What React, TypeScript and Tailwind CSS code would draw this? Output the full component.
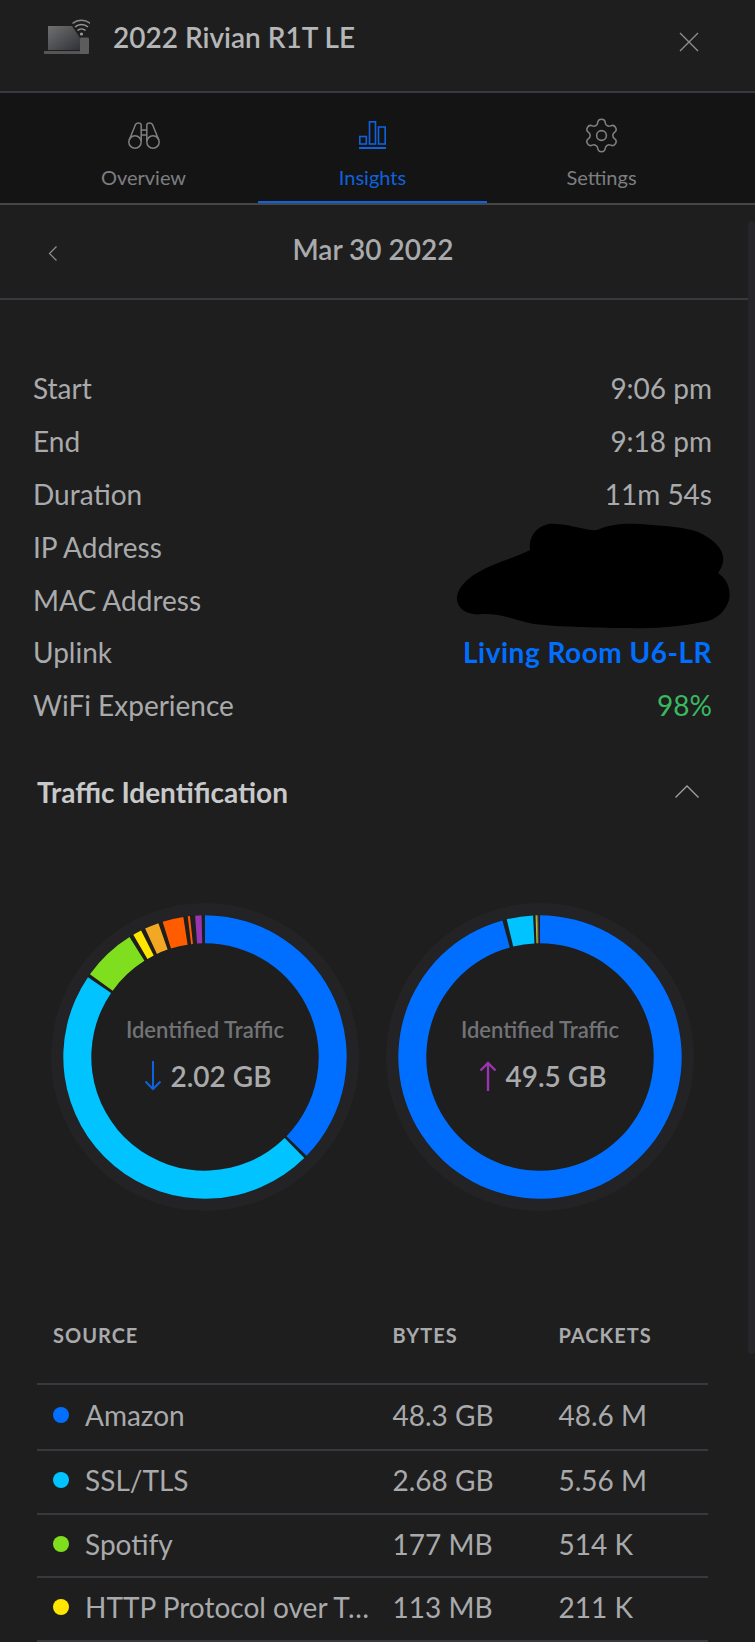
import { Settings } from "lucide-react";

const pt = (r: number, deg: number) => {
  const a = ((deg - 90) * Math.PI) / 180;
  return `${(153 + r * Math.cos(a)).toFixed(2)} ${(153 + r * Math.sin(a)).toFixed(2)}`;
};

// one ring slice, angles clockwise from the top
const slicePath = (from: number, to: number) => {
  const large = to - from > 180 ? 1 : 0;
  const r1 = 141.7;
  const r2 = 113.7;
  return `M ${pt(r1, from)} A ${r1} ${r1} 0 ${large} 1 ${pt(r1, to)} L ${pt(r2, to)} A ${r2} ${r2} 0 ${large} 0 ${pt(r2, from)} Z`;
};

const downSlices = [
  { from: 0, to: 134.2, color: "#006fff" },
  { from: 135.5, to: 304.3, color: "#00c3ff" },
  { from: 305.7, to: 327.8, color: "#7fdf1f" },
  { from: 329.6, to: 333.2, color: "#ffe600" },
  { from: 335, to: 340.8, color: "#f2a825" },
  { from: 342.6, to: 351.2, color: "#ff5c00" },
  { from: 353, to: 353.9, color: "#ff5c00" },
  { from: 356, to: 358.6, color: "#9a35b0" },
];

const upSlices = [
  { from: 0, to: 344.6, color: "#006fff" },
  { from: 346.4, to: 357.2, color: "#00c3ff" },
  { from: 358.2, to: 358.7, color: "#7fdf1f" },
  { from: 358.7, to: 359, color: "#f2a825" },
  { from: 359, to: 359.3, color: "#9a35b0" },
];

const details = [
  { label: "Start", value: "9:06 pm", tone: "text-[#a9aaac]" },
  { label: "End", value: "9:18 pm", tone: "text-[#a9aaac]" },
  { label: "Duration", value: "11m 54s", tone: "text-[#a9aaac]" },
  { label: "IP Address", value: "", tone: "" },
  { label: "MAC Address", value: "", tone: "" },
  { label: "Uplink", value: "Living Room U6-LR", tone: "text-[#006fff] font-bold tracking-[0.5px]" },
  { label: "WiFi Experience", value: "98%", tone: "text-[#39b860]" },
];

const rows = [
  { name: "Amazon", dot: "bg-[#006fff]", bytes: "48.3 GB", packets: "48.6 M", height: "h-[66px]" },
  { name: "SSL/TLS", dot: "bg-[#00c3ff]", bytes: "2.68 GB", packets: "5.56 M", height: "h-[64px]" },
  { name: "Spotify", dot: "bg-[#7fdf1f]", bytes: "177 MB", packets: "514 K", height: "h-[63.5px]" },
  { name: "HTTP Protocol over T…", dot: "bg-[#ffe600]", bytes: "113 MB", packets: "211 K", height: "h-[63.5px]" },
];

const DeviceIcon = () => (
  <svg width="46" height="38" viewBox="14 18 46 38" fill="none">
    <defs>
      <linearGradient id="screen" x1="0" y1="0" x2="1" y2="1">
        <stop offset="0" stopColor="#707070" />
        <stop offset="1" stopColor="#303238" />
      </linearGradient>
    </defs>
    <path d="M18 26 H42 L50 38 V50 H18 Z" fill="url(#screen)" />
    <rect x="14" y="51" width="37" height="3" fill="#555" />
    <rect x="50" y="37.500" width="9" height="16.500" rx="1" fill="#5c5c5c" />
    <circle cx="51.500" cy="34" r="1.600" fill="#9a9a9a" />
    <path d="M47.500 30.500 a6 6 0 0 1 8 0" stroke="#999" strokeWidth="1.500" />
    <path d="M45 27 a10 10 0 0 1 13 0" stroke="#999" strokeWidth="1.500" />
    <path d="M42.500 23.500 a14 14 0 0 1 18 0" stroke="#888" strokeWidth="1.500" />
  </svg>
);

const BinocularsIcon = () => (
  <svg width="32" height="27" viewBox="0 0 32 27" fill="none" stroke="#808080" strokeWidth="1.500">
    <circle cx="7" cy="20" r="6.200" />
    <circle cx="25" cy="20" r="6.200" />
    <path d="M1.200 18 L7.500 2.500 Q8.500 1 10.500 1 Q13 1 13.200 3 V19" />
    <path d="M30.800 18 L24.500 2.500 Q23.500 1 21.500 1 Q19 1 18.800 3 V19" />
    <path d="M13.200 8 H18.800 M13.200 13 H18.800" />
  </svg>
);

const BarsIcon = () => (
  <svg width="27" height="28" viewBox="0 0 27 28" fill="none" stroke="#0e62de" strokeWidth="1.600">
    <rect x="0.800" y="15.500" width="6.500" height="7.500" />
    <rect x="10.500" y="0.800" width="6" height="22.200" />
    <rect x="19.500" y="6" width="6.700" height="17" />
    <path d="M0 27 H27" strokeWidth="2" />
  </svg>
);

const Donut = ({
  slices,
  arrow,
  value,
}: {
  slices: { from: number; to: number; color: string }[];
  arrow: "down" | "up";
  value: string;
}) => (
  <div className="relative w-[306px] h-[306px]">
    <svg className="overflow-visible" width="306" height="306" viewBox="0 0 306 306" fill="none">
      <circle cx="153" cy="153" r="148" stroke="#232326" strokeWidth="12" />
      {slices.map((s) => (
        <path key={s.from} d={slicePath(s.from, s.to)} fill={s.color} />
      ))}
    </svg>
    <div className="absolute inset-0 flex flex-col items-center justify-center pb-[4px]">
      <p className="text-[22px] leading-[28px] font-semibold text-[#727377]">Identified Traffic</p>
      <div className="mt-[14px] flex flex-row items-center gap-[9px] pl-[5px]">
        {arrow === "down" ? (
          <svg width="18" height="30" viewBox="0 0 18 30" fill="none" stroke="#0e62de" strokeWidth="2">
            <path d="M9 0 V28 M1.500 20.500 L9 28 L16.500 20.500" />
          </svg>
        ) : (
          <svg width="18" height="30" viewBox="0 0 18 30" fill="none" stroke="#9a35b0" strokeWidth="2.400">
            <path d="M9 30 V2 M1.500 9.500 L9 2 L16.500 9.500" />
          </svg>
        )}
        <p className="text-[28px] leading-[36px] font-semibold text-[#a9aaac]">{value}</p>
      </div>
    </div>
  </div>
);

export default function App() {
  return (
    <div className="relative w-[755px] h-[1642px] overflow-hidden bg-[#1e1e1e] font-['Lato','Liberation_Sans',sans-serif]">
      {/* Header */}
      <div className="h-[93px] border-b-2 border-[#38393e] flex flex-row justify-between pl-[44px] pr-[56px]">
        <div className="flex flex-row items-start gap-[23px] pt-[18px]">
          <DeviceIcon />
          <p className="-mt-[1px] text-[28px] leading-[40px] font-semibold text-[#b5b6b8]">2022 Rivian R1T LE</p>
        </div>
        <svg className="mt-[32px]" width="20" height="20" viewBox="0 0 20 20" stroke="#8f9093" strokeWidth="1.300">
          <path d="M1 1 L19 19 M19 1 L1 19" />
        </svg>
      </div>

      {/* Tabs */}
      <div className="h-[112px] bg-[#141414] border-b-2 border-[#45464a] flex flex-row pl-[29px]">
        <div className="w-[229px] flex flex-col items-center pt-[27px]">
          <div className="h-[30px] flex items-center">
            <BinocularsIcon />
          </div>
          <p className="mt-[13px] text-[20px] leading-[28px] text-[#7d7e81]">Overview</p>
        </div>
        <div className="w-[229px] border-b-2 border-[#0e62de] flex flex-col items-center pt-[27px]">
          <div className="h-[30px] flex items-center">
            <BarsIcon />
          </div>
          <p className="mt-[13px] text-[20px] leading-[28px] text-[#0e62de]">Insights</p>
        </div>
        <div className="w-[229px] flex flex-col items-center pt-[27px]">
          <div className="h-[30px] flex items-center">
            <Settings size={39} strokeWidth={0.95} color="#808080" />
          </div>
          <p className="mt-[13px] text-[20px] leading-[28px] text-[#7d7e81]">Settings</p>
        </div>
      </div>

      {/* Date bar */}
      <div className="relative h-[95px] border-b-2 border-[#38393e] flex items-center justify-center pb-[5px] pr-[9px]">
        <svg className="absolute left-[48px] top-[41px]" width="10" height="15" viewBox="0 0 10 15" fill="none" stroke="#8f9093" strokeWidth="1.200">
          <path d="M8.500 0.500 L1.500 7.500 L8.500 14.500" />
        </svg>
        <p className="text-[28px] leading-[36px] font-semibold text-[#a9aaac]">Mar 30 2022</p>
      </div>

      {/* Details */}
      <div className="pt-[62px] pl-[33px] pr-[43px]">
        {details.map((d) => (
          <div key={d.label} className="h-[52.8px] flex flex-row items-center justify-between text-[28px] text-[#a9aaac]">
            <span>{d.label}</span>
            <span className={d.tone}>{d.value}</span>
          </div>
        ))}
      </div>

      {/* redacted values */}
      <svg className="absolute left-[450px] top-[516px]" width="285" height="120" viewBox="450 516 285 120">
        <path
          d="M530 550 C528 530 545 522 556 524 C575 525 590 532 597 530 C610 524 625 523 640 524 C665 526 685 527 698 532 C715 540 725 550 723 562 C722 567 720 570 718 573 C728 580 731 590 729 600 C726 610 718 618 708 621 C685 626 655 629 631 628 C600 628 560 627 534 624 C515 620 500 613 482 614 C470 616 458 610 457 600 C456 590 465 580 477 573 C495 562 515 558 530 550 Z"
          fill="#000"
        />
      </svg>

      {/* scrollbar thumb */}
      <div className="absolute right-0 top-[221px] w-[7px] h-[1133px] rounded-[4px] bg-[#252629]" />

      {/* Traffic Identification */}
      <div className="mt-[33px] h-[54px] pl-[37px] pr-[56px] flex flex-row items-center justify-between">
        <p className="text-[28px] font-bold text-[#c8c9ca]">Traffic Identification</p>
        <svg width="24" height="13" viewBox="0 0 24 13" fill="none" stroke="#a0a1a4" strokeWidth="1.300">
          <path d="M0.500 12.500 L12 1 L23.500 12.500" />
        </svg>
      </div>

      {/* Donuts */}
      <div className="mt-[85px] pl-[52px] flex flex-row gap-[29px]">
        <Donut slices={downSlices} arrow="down" value="2.02 GB" />
        <Donut slices={upSlices} arrow="up" value="49.5 GB" />
      </div>

      {/* Table */}
      <div className="mt-[110px] ml-[37px] w-[671px]">
        <div className="h-[63px] pl-[16px] grid grid-cols-[339.5px_166px_1fr] text-[20px] font-bold tracking-[1px] text-[#a9aaac]">
          <span>SOURCE</span>
          <span>BYTES</span>
          <span>PACKETS</span>
        </div>
        {rows.map((r) => (
          <div
            key={r.name}
            className={`${r.height} pl-[16px] pb-[3px] border-t-2 border-[#38393e] grid grid-cols-[339.5px_166px_1fr] items-center text-[28px] text-[#a9aaac]`}
          >
            <div className="flex flex-row items-center gap-[16px] min-w-0">
              <span className={`w-[16px] h-[16px] rounded-full shrink-0 ${r.dot}`} />
              <span className="whitespace-nowrap">{r.name}</span>
            </div>
            <span>{r.bytes}</span>
            <span>{r.packets}</span>
          </div>
        ))}
        <div className="border-t-2 border-[#38393e]" />
      </div>
    </div>
  );
}
